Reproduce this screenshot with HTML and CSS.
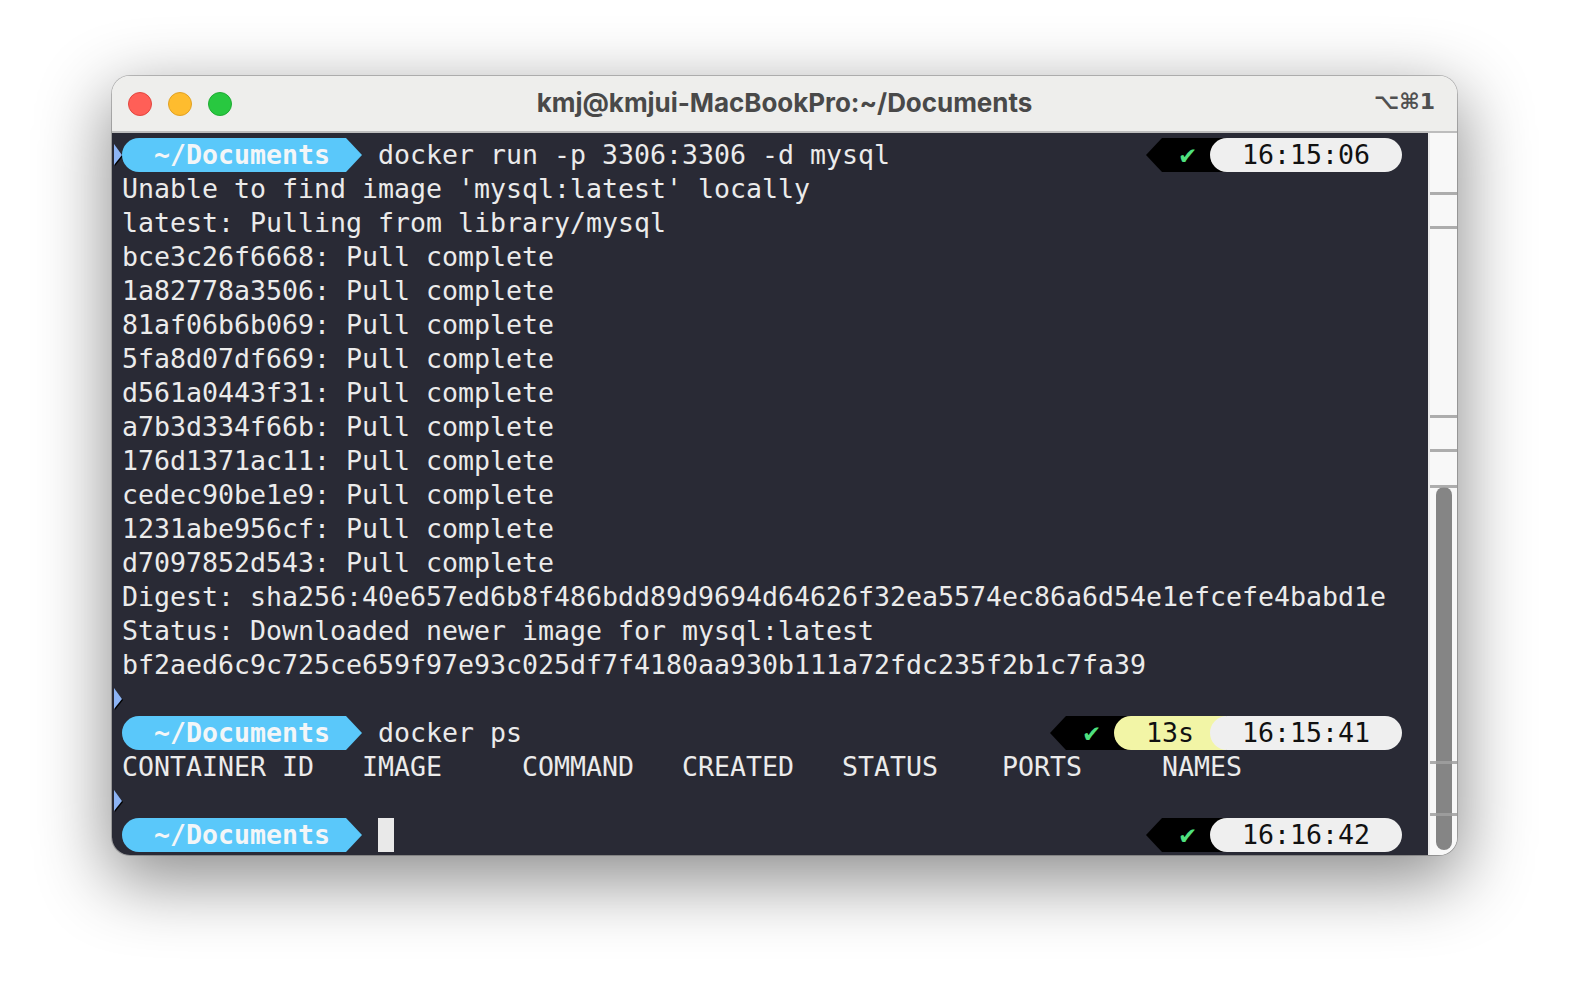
FILE: index.html
```html
<!DOCTYPE html>
<html>
<head>
 <meta charset="utf-8">
 <title>kmj@kmjui-MacBookPro:~/Documents</title>
 <link rel="stylesheet" href="styles.css">
</head>
<body>
<div class="Window">

 <div class="TitleBar">
  <div class="Lights">
   <span class="Light LightRed"></span>
   <span class="Light LightYellow"></span>
   <span class="Light LightGreen"></span>
  </div>
  <div class="Title">kmj@kmjui-MacBookPro:~/Documents</div>
  <div class="Shortcut">⌥⌘1</div>
 </div>

 <div class="TermBody">
  <div class="Screen">

   <!-- first prompt -->
   <div class="Line">
    <span class="Gutter"><svg width="10" height="34" viewBox="0 0 10 34"><polygon points="3,8 11,18 3,28" fill="#000"/><polygon points="2,6 10,17 2,27" fill="#8db4f4"/></svg></span>
    <span class="Text">
     <span class="Pill">~/Documents</span><span class="PillArrow"></span><span> docker run -p 3306:3306 -d mysql</span>
     <span class="Status">
      <span class="StArrow"></span><span class="StOk"><span class="Check">✔</span></span><span class="StTime">16:15:06</span>
     </span>
    </span>
   </div>

   <div class="Line"><span class="Gutter"></span><span class="Text">Unable to find image 'mysql:latest' locally</span></div>
   <div class="Line"><span class="Gutter"></span><span class="Text">latest: Pulling from library/mysql</span></div>
   <div class="Line"><span class="Gutter"></span><span class="Text">bce3c26f6668: Pull complete</span></div>
   <div class="Line"><span class="Gutter"></span><span class="Text">1a82778a3506: Pull complete</span></div>
   <div class="Line"><span class="Gutter"></span><span class="Text">81af06b6b069: Pull complete</span></div>
   <div class="Line"><span class="Gutter"></span><span class="Text">5fa8d07df669: Pull complete</span></div>
   <div class="Line"><span class="Gutter"></span><span class="Text">d561a0443f31: Pull complete</span></div>
   <div class="Line"><span class="Gutter"></span><span class="Text">a7b3d334f66b: Pull complete</span></div>
   <div class="Line"><span class="Gutter"></span><span class="Text">176d1371ac11: Pull complete</span></div>
   <div class="Line"><span class="Gutter"></span><span class="Text">cedec90be1e9: Pull complete</span></div>
   <div class="Line"><span class="Gutter"></span><span class="Text">1231abe956cf: Pull complete</span></div>
   <div class="Line"><span class="Gutter"></span><span class="Text">d7097852d543: Pull complete</span></div>
   <div class="Line"><span class="Gutter"></span><span class="Text">Digest: sha256:40e657ed6b8f486bdd89d9694d64626f32ea5574ec86a6d54e1efcefe4babd1e</span></div>
   <div class="Line"><span class="Gutter"></span><span class="Text">Status: Downloaded newer image for mysql:latest</span></div>
   <div class="Line"><span class="Gutter"></span><span class="Text">bf2aed6c9c725ce659f97e93c025df7f4180aa930b111a72fdc235f2b1c7fa39</span></div>

   <div class="Line">
    <span class="Gutter"><svg width="10" height="34" viewBox="0 0 10 34"><polygon points="3,8 11,18 3,28" fill="#000"/><polygon points="2,6 10,17 2,27" fill="#8db4f4"/></svg></span>
    <span class="Text"></span>
   </div>

   <!-- second prompt -->
   <div class="Line">
    <span class="Gutter"></span>
    <span class="Text">
     <span class="Pill">~/Documents</span><span class="PillArrow"></span><span> docker ps</span>
     <span class="Status">
      <span class="StArrow"></span><span class="StOk"><span class="Check">✔</span></span><span class="StDuration">13s</span><span class="StTime">16:15:41</span>
     </span>
    </span>
   </div>

   <div class="Line"><span class="Gutter"></span><span class="Text">CONTAINER ID   IMAGE     COMMAND   CREATED   STATUS    PORTS     NAMES</span></div>

   <div class="Line">
    <span class="Gutter"><svg width="10" height="34" viewBox="0 0 10 34"><polygon points="3,8 11,18 3,28" fill="#000"/><polygon points="2,6 10,17 2,27" fill="#8db4f4"/></svg></span>
    <span class="Text"></span>
   </div>

   <!-- current prompt -->
   <div class="Line">
    <span class="Gutter"></span>
    <span class="Text">
     <span class="Pill">~/Documents</span><span class="PillArrow"></span><span> </span><span class="Cursor"></span>
     <span class="Status">
      <span class="StArrow"></span><span class="StOk"><span class="Check">✔</span></span><span class="StTime">16:16:42</span>
     </span>
    </span>
   </div>

  </div>

  <div class="ScrollTrack">
   <div class="ScrollThumb"></div>
   <span class="ScrollMark" style="top:59px"></span>
   <span class="ScrollMark" style="top:93px"></span>
   <span class="ScrollMark" style="top:282px"></span>
   <span class="ScrollMark" style="top:316px"></span>
   <span class="ScrollMark" style="top:352px"></span>
   <span class="ScrollMark" style="top:628px"></span>
   <span class="ScrollMark" style="top:680px"></span>
  </div>
 </div>

</div>
</body>
</html>
```

FILE: styles.css
```css
html, body {
 margin:0;
 background:#ffffff;
}
body {
 padding:76px 0 0 112px;
 height:1004px;
 box-sizing:border-box;
 overflow:hidden;
}

.Window {
 width:1345px;
 border-radius:18px;
 overflow:hidden;
 box-shadow:0 0 0 1px rgba(0,0,0,0.22), 0 22px 70px 4px rgba(0,0,0,0.45);
}

/* Title bar */
.TitleBar {
 height:55px;
 display:grid;
 grid-template-columns:1fr auto 1fr;
 align-items:center;
 background:#eeeeec;
 border-bottom:2px solid #bdbdbd;
 font-family:Inter, "Liberation Sans", sans-serif;
}
.Lights {
 display:flex;
 gap:16px;
 padding-left:16px;
}
.Light {
 width:24px;
 height:24px;
 border-radius:50%;
 box-sizing:border-box;
}
.LightRed {
 background:#ff5f57;
 border:1px solid #e2463f;
}
.LightYellow {
 background:#febc2e;
 border:1px solid #e1a124;
}
.LightGreen {
 background:#28c840;
 border:1px solid #1fab33;
}
.Title {
 font-size:26px;
 font-weight:700;
 color:#494949;
 letter-spacing:-0.05px;
 padding-bottom:2px;
}
.Shortcut {
 justify-self:end;
 padding-right:22px;
 padding-bottom:4px;
 font-family:"DejaVu Sans", sans-serif;
 font-size:22px;
 font-weight:bold;
 color:#505050;
}

/* Terminal */
.TermBody {
 display:flex;
 height:722px;
}
.Screen {
 width:1316px;
 padding-top:5px;
 box-sizing:border-box;
 background:#292a35;
 color:#ebebeb;
 font-family:"DejaVu Sans Mono", "Liberation Mono", monospace;
 font-size:26.58px;
}
.Line {
 display:flex;
 height:34px;
 line-height:34px;
}
.Gutter {
 width:10px;
 flex:none;
}
.Gutter svg {
 display:block;
 overflow:visible;
}
.Text {
 width:1280px;
 display:flex;
 white-space:pre;
}

/* Left prompt */
.Pill {
 background:#5ac8fa;
 color:#f3f6f8;
 font-weight:bold;
 padding:0 16px 0 32px;
 border-radius:17px 0 0 17px / 17px 0 0 17px;
}
.PillArrow {
 width:16px;
 height:34px;
 background:#5ac8fa;
 clip-path:polygon(0 0, 100% 50%, 0 100%);
}
.Cursor {
 width:16px;
 height:34px;
 background:#e9e9e9;
}

/* Right prompt */
.Status {
 margin-left:auto;
 display:flex;
}
.StArrow {
 width:16px;
 height:34px;
 background:#000000;
 clip-path:polygon(100% 0, 0 50%, 100% 100%);
}
.StOk {
 background:#000000;
 padding:0 32px 0 16px;
}
.Check {
 display:inline-block;
 width:16px;
 text-align:center;
 font-family:"DejaVu Sans", sans-serif;
 font-size:23px;
 color:#4fe07f;
}
.StDuration {
 background:#f2f5a6;
 color:#111111;
 margin-left:-16px;
 padding:0 32px;
 border-radius:17px 0 0 17px;
}
.StTime {
 background:#efefef;
 color:#111111;
 margin-left:-16px;
 padding:0 32px;
 border-radius:17px;
}

/* Scrollbar */
.ScrollTrack {
 position:relative;
 flex:1;
 background:#f8f8f8;
 border-left:2px solid #ececec;
}
.ScrollThumb {
 position:absolute;
 top:354px;
 left:6px;
 width:16px;
 height:363px;
 border-radius:8px;
 background:#858585;
}
.ScrollMark {
 position:absolute;
 left:0;
 right:0;
 height:3px;
 background:rgba(160,160,160,0.85);
}
```
